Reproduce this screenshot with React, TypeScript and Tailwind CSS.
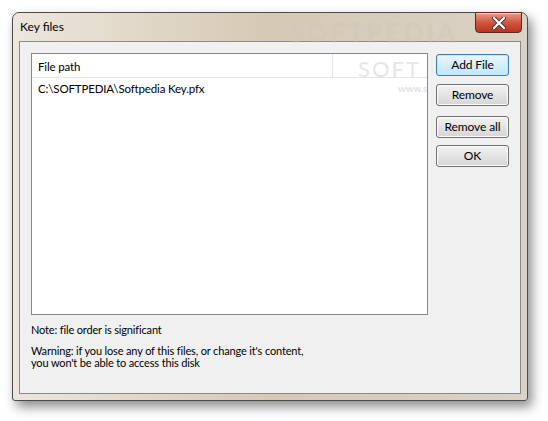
import React from "react"

const font = { fontFamily: 'Lato, "Noto Sans", sans-serif' }

const Btn = ({ label, active = false }: { label: string; active?: boolean }) => (
  <button
    className={`block h-[22px] w-[73px] rounded-[3px] border text-[12px] leading-[20px] tracking-[-0.1px] text-black ${
      active
        ? "border-[#3c7fb1] bg-gradient-to-b from-[#eaf6fd] to-[#bee6fd] shadow-[inset_0_0_0_1px_#c4e5f6]"
        : "border-[#707070] bg-gradient-to-b from-[#f2f2f2] to-[#d6d6d6] shadow-[inset_0_0_0_1px_#fcfcfc]"
    }`}
  >
    {label}
  </button>
)

export default function App() {
  return (
    <div className="h-[421px] w-[548px] overflow-hidden bg-white pl-[12px] pt-[12px]" style={font}>
      {/* WINDOW */}
      <div className="flex h-[389px] w-[516px] flex-col rounded-t-[7px] rounded-b-[3px] border border-[#4b4b4b] bg-gradient-to-r from-[#ece6dc] via-[#d6c9b4] to-[#d9d2c6] shadow-[4px_6px_12px_rgba(0,0,0,0.45)]">
        {/* TITLE BAR */}
        <div className="relative flex h-[28px] shrink-0 items-center pl-[7px]">
          <span className="text-[12px] text-black">Key files</span>
          <span className="pointer-events-none absolute left-[276px] top-[0px] select-none text-[26px] font-bold tracking-[3px] text-[#cfc5b6] opacity-50 blur-[1px]">
            SOFTPEDIA
          </span>
          {/* CLOSE */}
          <div className="absolute right-[5px] top-[-1px] flex h-[21px] w-[47px] items-center justify-center rounded-b-[4px] border border-[#5a2a20] bg-gradient-to-b from-[#e89a88] via-[#d0553f] to-[#b8321f] shadow-[inset_0_1px_0_rgba(255,255,255,0.5)]">
            <svg width="14" height="12" viewBox="0 0 14 12">
              <path
                d="M2 1 L12 11 M12 1 L2 11"
                stroke="#3a3a3a"
                strokeWidth="4"
                strokeLinecap="round"
              />
              <path
                d="M2 1 L12 11 M12 1 L2 11"
                stroke="#ffffff"
                strokeWidth="2.2"
                strokeLinecap="round"
              />
            </svg>
          </div>
        </div>

        {/* CLIENT */}
        <div className="mx-[6px] mb-[6px] flex flex-1 flex-col border border-[#8c8a86] bg-[#f0f0f0] px-[11px] pt-[11px] text-[11.5px] tracking-[-0.15px]">
          <div className="flex gap-[8px]">
            {/* LIST */}
            <div className="flex h-[262px] w-[397px] flex-col border border-[#828790] bg-white">
              <div className="relative flex h-[24px] border-b border-[#e5e5e5] text-black">
                <div className="flex w-[301px] items-center border-r border-[#e5e5e5] pl-[6px] pt-[3px]">File path</div>
                <span className="pointer-events-none absolute left-[326px] top-[-2px] select-none text-[22px] tracking-[2px] text-[#e6e6e6]">
                  SOFT
                </span>
              </div>
              <div className="relative flex h-[20px] items-center pl-[6px] pt-[2px] text-black">
                C:\SOFTPEDIA\Softpedia Key.pfx
                <span className="pointer-events-none absolute left-[366px] top-[3px] select-none text-[10px] text-[#dadada]">
                  www.s
                </span>
              </div>
            </div>

            {/* BUTTONS */}
            <div className="flex flex-col gap-[8px] pt-[1px]">
              <Btn label="Add File" active />
              <Btn label="Remove" />
              <div className="mt-[2px]">
                <Btn label="Remove all" />
              </div>
              <div className="-mt-[1px]">
                <Btn label="OK" />
              </div>
            </div>
          </div>

          {/* NOTES */}
          <div className="mt-[7px] text-[11px] leading-[15px] text-black">Note: file order is significant</div>
          <div className="mt-[8px] text-[11px] leading-[12px] text-black">
            <div>Warning: if you lose any of this files, or change it's content,</div>
            <div>you won't be able to access this disk</div>
          </div>
        </div>
      </div>
    </div>
  )
}
